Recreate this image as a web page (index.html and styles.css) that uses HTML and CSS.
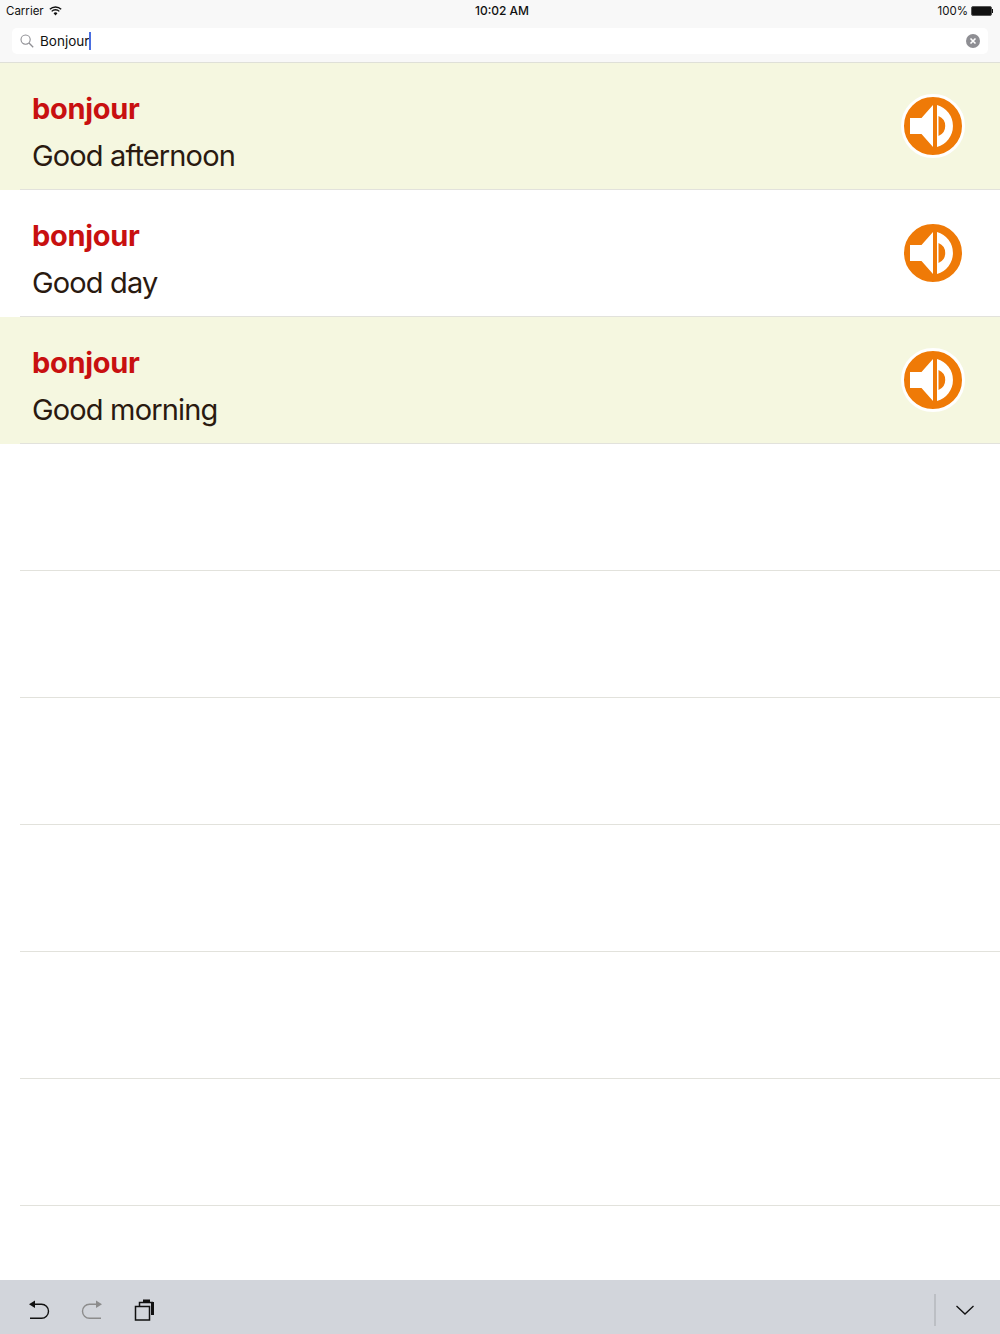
FILE: index.html
```html
<!DOCTYPE html>
<html lang="en">
<head>
    <meta charset="UTF-8">
    <meta name="viewport" content="width=device-width, initial-scale=1.0">
    <title>Dictionary</title>
    <link rel="stylesheet" href="styles.css">
</head>

<body>
    <header>
        <div class="status-bar">
            <div class="status-left">
                <span>Carrier</span>
                <svg class="wifi" width="13" height="10" viewBox="0 0 14 10">
                    <path d="M7 9.800 4.900 7.500a3 3 0 0 1 4.200 0z" fill="#111"/>
                    <path d="M2.900 5.400a5.800 5.800 0 0 1 8.200 0M.9 3.200a8.700 8.700 0 0 1 12.200 0" fill="none" stroke="#111" stroke-width="1.500"/>
                </svg>
            </div>
            <div class="status-time">10:02 AM</div>
            <div class="status-right">
                <span>100%</span>
                <div class="battery"></div>
                <div class="battery-tip"></div>
            </div>
        </div>
        <div class="search-bar">
            <svg class="search-icon" width="14" height="14" viewBox="0 0 14 14">
                <circle cx="5.600" cy="5.600" r="4.600" fill="none" stroke="#8e8e93" stroke-width="1.100"/>
                <path d="M9 9l4.200 4.200" stroke="#8e8e93" stroke-width="1.300"/>
            </svg>
            <div class="search-text">Bonjour</div>
            <div class="caret"></div>
            <svg class="clear-icon" width="14" height="14" viewBox="0 0 14 14">
                <circle cx="7" cy="7" r="7" fill="#8e8e93"/>
                <path d="M4.500 4.500l5 5M9.500 4.500l-5 5" stroke="#fff" stroke-width="1.600"/>
            </svg>
        </div>
    </header>

    <main class="list">
        <div class="row highlight">
            <div class="row-inner">
                <div class="row-text">
                    <div class="word">bonjour</div>
                    <div class="meaning">Good afternoon</div>
                </div>
                <svg class="speaker" width="64" height="64" viewBox="0 0 64 64">
                    <circle cx="32" cy="32" r="30.500" fill="#ef7a07" stroke="#fff" stroke-width="3"/>
                    <path d="M9 24h11.500L32 11v42L20.500 40H9z" fill="#fff"/>
                    <path d="M36 11a21.800 21.800 0 0 1 0 42zM37.500 22v20a10.800 10.800 0 0 0 0-20z" fill="#fff" fill-rule="evenodd"/>
                </svg>
            </div>
        </div>
        <div class="row">
            <div class="row-inner">
                <div class="row-text">
                    <div class="word">bonjour</div>
                    <div class="meaning">Good day</div>
                </div>
                <svg class="speaker" width="64" height="64" viewBox="0 0 64 64">
                    <circle cx="32" cy="32" r="30.500" fill="#ef7a07" stroke="#fff" stroke-width="3"/>
                    <path d="M9 24h11.500L32 11v42L20.500 40H9z" fill="#fff"/>
                    <path d="M36 11a21.800 21.800 0 0 1 0 42zM37.500 22v20a10.800 10.800 0 0 0 0-20z" fill="#fff" fill-rule="evenodd"/>
                </svg>
            </div>
        </div>
        <div class="row highlight">
            <div class="row-inner">
                <div class="row-text">
                    <div class="word">bonjour</div>
                    <div class="meaning">Good morning</div>
                </div>
                <svg class="speaker" width="64" height="64" viewBox="0 0 64 64">
                    <circle cx="32" cy="32" r="30.500" fill="#ef7a07" stroke="#fff" stroke-width="3"/>
                    <path d="M9 24h11.500L32 11v42L20.500 40H9z" fill="#fff"/>
                    <path d="M36 11a21.800 21.800 0 0 1 0 42zM37.500 22v20a10.800 10.800 0 0 0 0-20z" fill="#fff" fill-rule="evenodd"/>
                </svg>
            </div>
        </div>
        <div class="row"><div class="row-inner"></div></div>
        <div class="row"><div class="row-inner"></div></div>
        <div class="row"><div class="row-inner"></div></div>
        <div class="row"><div class="row-inner"></div></div>
        <div class="row"><div class="row-inner"></div></div>
        <div class="row"><div class="row-inner"></div></div>
        <div class="row"><div class="row-inner"></div></div>
    </main>

    <footer>
        <div class="footer-left">
            <svg width="24" height="22" viewBox="0 0 24 22">
                <path d="M8 1.500 2 5.200 8 9z" fill="#111"/>
                <path d="M7 5.200h7.500a7 7 0 0 1 0 14H3" fill="none" stroke="#111" stroke-width="1.400"/>
            </svg>
            <svg width="24" height="22" viewBox="0 0 24 22">
                <path d="M16 1.500 22 5.200 16 9z" fill="#8c8c8c"/>
                <path d="M17 5.200H9.500a7 7 0 0 0 0 14H21" fill="none" stroke="#8c8c8c" stroke-width="1.400"/>
            </svg>
            <svg width="22" height="22" viewBox="0 0 22 22">
                <path d="M6.500 7V3.500H20" fill="none" stroke="#111" stroke-width="1.500"/>
                <path d="M10 .5h7v3h-7zM18 3h3v13h-3z" fill="#111"/>
                <rect x="2.500" y="7.500" width="14" height="13.500" fill="#d2d5db" stroke="#111" stroke-width="1.500"/>
            </svg>
        </div>
        <div class="footer-right">
            <div class="divider"></div>
            <svg width="18" height="10" viewBox="0 0 18 10">
                <path d="M.5 1 9 9l8.500-8" fill="none" stroke="#111" stroke-width="1.300"/>
            </svg>
        </div>
    </footer>
</body>
</html>
```

FILE: styles.css
```css
body{
    margin: 0;
    height: 100vh;
    display: flex;
    flex-direction: column;
    overflow: hidden;
    font-family: "Inter", "Liberation Sans", sans-serif;
    background-color: #fff;
}
header{
    height: 62px;
    flex-shrink: 0;
    background-color: #f8f8f8;
    border-bottom: 1px solid #dfe0d8;
}
.status-bar{
    height: 21px;
    padding: 0 7px 0 6px;
    display: flex;
    justify-content: space-between;
    align-items: center;
    position: relative;
    font-size: 11.5px;
    color: #111;
}
.status-left{
    display: flex;
    align-items: center;
    gap: 5px;
}
.status-time{
    position: absolute;
    left: 4px;
    right: 0;
    text-align: center;
    font-size: 12px;
    font-weight: 500;
}
.status-right{
    display: flex;
    align-items: center;
}
.battery{
    width: 19px;
    height: 8px;
    margin-left: 3px;
    background-color: #111;
    border-radius: 2px;
    border: 1px solid #555;
}
.battery-tip{
    width: 1px;
    height: 4px;
    background-color: #111;
}
.search-bar{
    height: 26px;
    margin: 7px 12px 0;
    padding: 0 8px;
    display: flex;
    align-items: center;
    background-color: #fff;
    border-radius: 5px;
}
.search-text{
    margin-left: 6px;
    font-size: 13.5px;
    color: #111;
}
.caret{
    width: 2px;
    height: 18px;
    background-color: #4a6ee0;
}
.clear-icon{
    margin-left: auto;
}
.list{
    flex: 1;
    overflow: hidden;
}
.row{
    height: 127px;
    padding-left: 20px;
    box-sizing: border-box;
}
.highlight{
    background-color: #f5f7e0;
}
.row-inner{
    height: 100%;
    box-sizing: border-box;
    padding: 0 35px 0 12px;
    display: flex;
    justify-content: space-between;
    align-items: center;
    border-bottom: 1px solid #e2e2dc;
}
.row-text{
    padding-top: 14px;
}
.word{
    font-size: 29px;
    font-weight: 700;
    line-height: 46px;
    letter-spacing: -0.3px;
    color: #c81010;
}
.meaning{
    font-size: 29px;
    line-height: 48px;
    letter-spacing: -0.85px;
    color: #2a1a10;
}
footer{
    height: 54px;
    box-sizing: border-box;
    flex-shrink: 0;
    padding: 6px 26px 0 27px;
    display: flex;
    justify-content: space-between;
    align-items: center;
    background-color: #d2d5db;
}
.footer-left{
    display: flex;
    align-items: center;
    gap: 29px;
}
.footer-right{
    display: flex;
    align-items: center;
    gap: 20px;
}
.divider{
    width: 2px;
    height: 32px;
    background-color: #bcbfc4;
}
```
